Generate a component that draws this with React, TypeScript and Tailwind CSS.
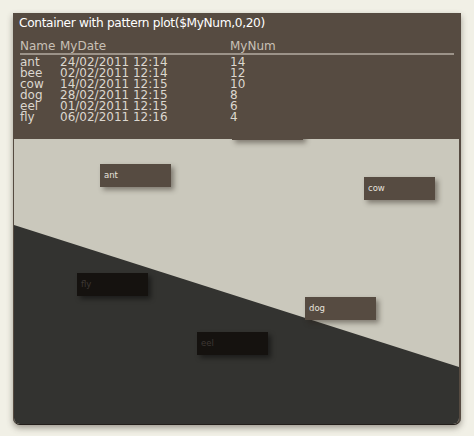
import React from 'react'

interface Row {
  name: string
  date: string
  num: number
}

const rows: Row[] = [
  { name: 'ant', date: '24/02/2011 12:14', num: 14 },
  { name: 'bee', date: '02/02/2011 12:14', num: 12 },
  { name: 'cow', date: '14/02/2011 12:15', num: 10 },
  { name: 'dog', date: '28/02/2011 12:15', num: 8 },
  { name: 'eel', date: '01/02/2011 12:15', num: 6 },
  { name: 'fly', date: '06/02/2011 12:16', num: 4 },
]

// node positions inside the plot area (px); bee sits under the header
const nodes = [
  { name: 'bee', x: 218, y: -22, dark: false, hidden: true },
  { name: 'ant', x: 86, y: 25, dark: false, hidden: false },
  { name: 'cow', x: 350, y: 38, dark: false, hidden: false },
  { name: 'fly', x: 63, y: 134, dark: true, hidden: false },
  { name: 'dog', x: 291, y: 158, dark: false, hidden: false },
  { name: 'eel', x: 183, y: 193, dark: true, hidden: false },
]

export default function App() {
  return (
    <div className="min-h-screen bg-[#f1f0e6] pt-[13px] pl-[13px] font-['DejaVu_Sans',sans-serif]">
      <div className="flex flex-col w-[448px] h-[412px] bg-[#564b41] rounded-b-[7px] border-b border-[#231e1a] shadow-[0_3px_6px_rgba(60,50,40,0.45)]">
        {/* Header with table */}
        <div className="relative z-10 h-[126px] shrink-0 pl-[6px] pr-[6px] pt-[2px]">
          <div className="text-[12.2px] leading-[17px] text-white tracking-[-0.35px]">
            Container with pattern plot($MyNum,0,20)
          </div>
          <div className="mt-[9px] ml-[1px] mr-[1px] text-[12px] leading-[11px]">
            <div className="flex text-[#c8c0b6] border-b-2 border-[#9c9389] pb-[1px]">
              <span className="w-[40px]">Name</span>
              <span className="w-[170px]">MyDate</span>
              <span>MyNum</span>
            </div>
            <div className="pt-[2px] text-[#dcd7cf]">
              {rows.map((r) => (
                <div key={r.name} className="flex">
                  <span className="w-[40px]">{r.name}</span>
                  <span className="w-[170px]">{r.date}</span>
                  <span>{r.num}</span>
                </div>
              ))}
            </div>
          </div>
        </div>

        {/* Plot area */}
        <div className="relative flex-1 ml-[1px] mr-[2px] overflow-hidden rounded-b-[6px] bg-[#cac8bc]">
          <svg className="absolute inset-0" width="445" height="285" viewBox="0 0 445 285">
            <polygon points="0,86 445,228 445,285 0,285" fill="#333330" />
          </svg>
          {nodes.map((n) => (
            <div
              key={n.name}
              className={`absolute w-[71px] h-[23px] flex items-center pl-[4px] text-[8.5px] ${
                n.dark
                  ? 'bg-[#15120f] text-[#3d3834] shadow-[3px_3px_5px_rgba(0,0,0,0.45)]'
                  : 'bg-[#564b41] text-[#e6e2dc] shadow-[3px_3px_5px_rgba(40,32,25,0.45)]'
              }`}
              style={{ left: n.x, top: n.y }}
            >
              {n.hidden ? null : n.name}
            </div>
          ))}
        </div>
      </div>
    </div>
  )
}
